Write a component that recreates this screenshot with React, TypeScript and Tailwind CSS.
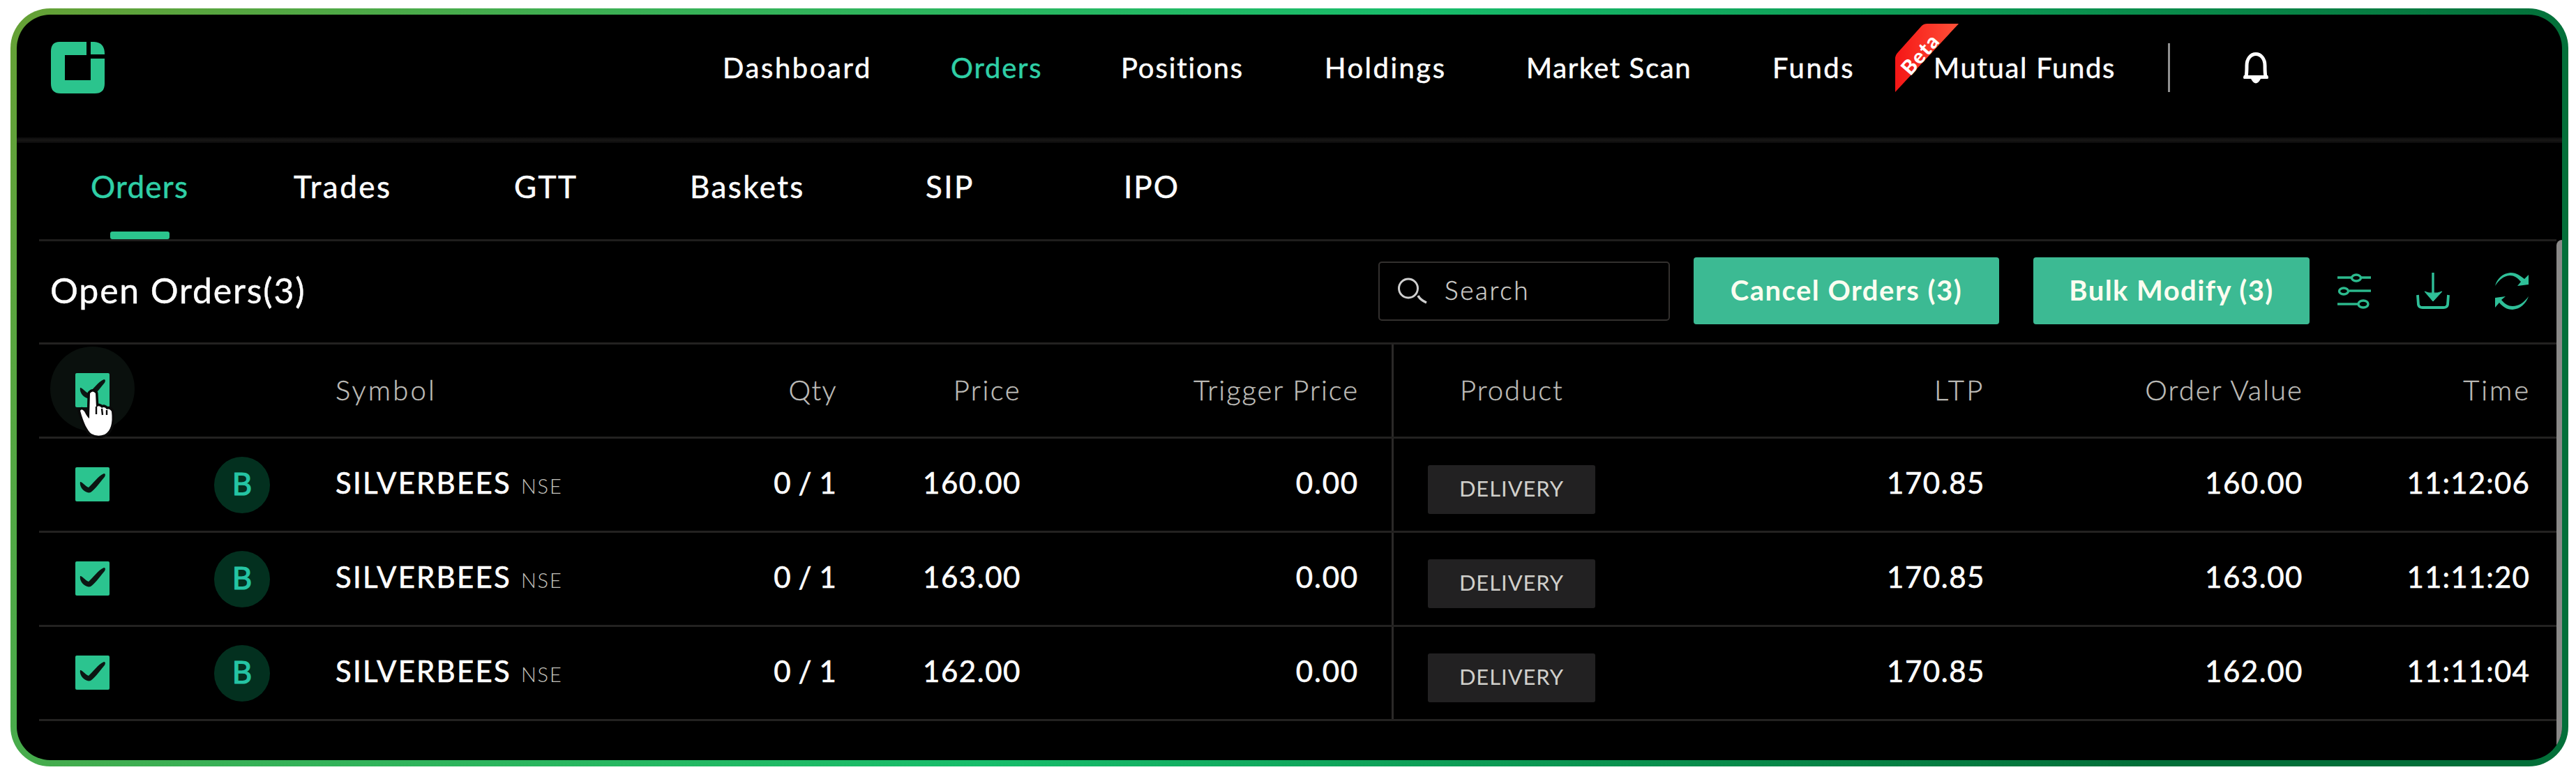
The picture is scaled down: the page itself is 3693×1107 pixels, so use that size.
import type { ReactNode } from "react";

const navItems = [
  { label: "Dashboard", cls: "w-[327px] tracking-[2.6px] text-white" },
  { label: "Orders", cls: "w-[244px] tracking-[1.8px] text-[#2fcfa6]" },
  { label: "Positions", cls: "w-[292px] tracking-[1.9px] text-white" },
  { label: "Holdings", cls: "w-[289px] tracking-[2.5px] text-white" },
  { label: "Market Scan", cls: "w-[353px] tracking-[1.7px] text-white" },
  { label: "Funds", cls: "w-[231px] tracking-[2.5px] text-white" },
];

const tabs = [
  { label: "Orders", active: true, cls: "w-[291px] tracking-[1.26px] text-[#2fcfa6]" },
  { label: "Trades", active: false, cls: "w-[316px] tracking-[2.49px] text-white" },
  { label: "GTT", active: false, cls: "w-[252px] tracking-[2.5px] text-white" },
  { label: "Baskets", active: false, cls: "w-[338px] tracking-[2.4px] text-white" },
  { label: "SIP", active: false, cls: "w-[284px] tracking-[2.4px] text-white" },
  { label: "IPO", active: false, cls: "tracking-[2px] text-white" },
];

const orders = [
  { price: "160.00", value: "160.00", time: "11:12:06" },
  { price: "163.00", value: "163.00", time: "11:11:20" },
  { price: "162.00", value: "162.00", time: "11:11:04" },
];

const rowGrid =
  "grid h-[135px] grid-cols-[196px_229px_418px_301px_264px_534px_402px_446px_456px_363px] border-b-[3px] border-[#232221]";

function Logo() {
  return (
    <svg className="h-[74px] w-[77px] shrink-0" viewBox="0 0 77 74" fill="#2bc48d">
      <path d="M12 0H51V19H20V55H57V24H77V60Q77 74 63 74H14Q0 74 0 60V14Q0 0 12 0Z" />
      <path d="M57 0H62Q77 1 77 17V18H57Z" />
    </svg>
  );
}

function Bell() {
  return (
    <svg className="ml-[104px] h-[46px] w-[38px] shrink-0" viewBox="0 0 38 46" fill="none">
      <path
        d="M5 36C6 31 6 26 6 20C6 10 12 3.5 19 3.5S32 10 32 20C32 26 32 31 33 36"
        stroke="white"
        strokeWidth="5"
      />
      <path d="M2 34H36Q38 38 36 39H26Q19 52 12 39H2Q0 38 2 34Z" fill="white" />
    </svg>
  );
}

function BetaRibbon() {
  return (
    <svg className="absolute -left-[55px] -top-[39px] h-[98px] w-[91px] overflow-visible" viewBox="0 0 91 98">
      <defs>
        <linearGradient id="ribbon" x1="0" y1="0" x2="1" y2="0">
          <stop offset="0" stopColor="#f51616" />
          <stop offset="1" stopColor="#ff5138" />
        </linearGradient>
      </defs>
      <path d="M0 50Q0 45 4 41L38 3Q41 0 46 0H91L0 98Z" fill="url(#ribbon)" />
      <text
        transform="translate(35 43) rotate(-49)"
        textAnchor="middle"
        dominantBaseline="central"
        fill="#fff"
        fontFamily="Lato, sans-serif"
        fontWeight="900"
        fontSize="29"
      >
        Beta
      </text>
    </svg>
  );
}

function Checkbox() {
  return (
    <svg className="h-[49px] w-[49px]" viewBox="0 0 49 49">
      <rect width="49" height="49" rx="2" fill="#2bc48f" />
      <path
        d="M7 21C9 20 13 26 19 29C25 24 32 13 41 9C44 9 43 13 41 15C35 22 28 32 22 36C19 37 16 36 13 34C9 31 6 26 7 21Z"
        fill="#0c1512"
      />
    </svg>
  );
}

function HandCursor() {
  return (
    <svg className="absolute left-[51px] top-[62px] h-[70px] w-[56px] overflow-visible" viewBox="0 0 56 70">
      <path
        d="M22 8Q26 3 30 8L31 28Q35 24 39 29Q43 26 46 31Q50 29 53 34Q56 60 43 67Q33 71 24 66C18 61 13 51 8 33Q10 29 14 34Q18 42 21 44Z"
        fill="white"
        stroke="#0a0a0a"
        strokeWidth="7"
        strokeLinejoin="round"
        paintOrder="stroke"
      />
      <path d="M31 27V38M39 30L40 39M46 32V39" stroke="#0a0a0a" strokeWidth="2.4" />
    </svg>
  );
}

function SlidersIcon() {
  return (
    <svg className="ml-[40px] h-[51px] w-[48px] shrink-0" viewBox="0 0 48 51" fill="none" stroke="#2cba8d" strokeWidth="3.4">
      <path d="M0 6H20M34 6H48" />
      <ellipse cx="27" cy="6.500" rx="6.500" ry="4.500" />
      <path d="M17 25H48" />
      <ellipse cx="9" cy="25.500" rx="6.500" ry="4.500" />
      <path d="M0 44H30" />
      <ellipse cx="37" cy="44" rx="7" ry="5" />
    </svg>
  );
}

function DownloadIcon() {
  return (
    <svg className="ml-[65px] h-[52px] w-[48px] shrink-0" viewBox="0 0 48 52" fill="none" stroke="#2fbf98">
      <path d="M24 0V32" strokeWidth="3.4" />
      <path d="M12 27Q18 30 24 29Q30 30 37 27L24 41Z" fill="#2fbf98" />
      <path d="M2 32L3 46Q4 50 9 50H39Q44 50 45 46L46 32" strokeWidth="3.800" />
    </svg>
  );
}

function RefreshIcon() {
  return (
    <svg className="ml-[64px] h-[53px] w-[50px] shrink-0" viewBox="0 0 50 53" fill="#2fbf98">
      <path d="M1 19C4 8 12 1 23 0C32 0 38 5 43 9L49 3V17L33 19L38 13C33 7 28 4 22 4C13 5 7 10 1 19Z" />
      <path d="M49 34C45 45 37 52 26 53C18 53 12 49 7 43L1 50V36L16 34L10 39C15 45 20 48 26 48C35 48 42 43 49 34Z" />
    </svg>
  );
}

function NumberCell({ children, cls }: { children: ReactNode; cls: string }) {
  return (
    <div
      className={`flex items-center justify-end pb-[6px] text-[42px] text-white [-webkit-text-stroke:0.6px_white] ${cls}`}
    >
      {children}
    </div>
  );
}

function HeadCell({ children, cls }: { children: ReactNode; cls: string }) {
  return (
    <div
      className={`flex items-center pb-[3px] text-[40px] font-light text-[#bfbeba] [-webkit-text-stroke:0.4px_#bfbeba] ${cls}`}
    >
      {children}
    </div>
  );
}

export default function App() {
  return (
    <div className="h-[1107px] w-[3693px] whitespace-nowrap bg-white pl-[15px] pt-3 font-['Lato',sans-serif]">
      <div className="h-[1087px] w-[3667px] rounded-[57px] bg-[linear-gradient(120deg,#66a035_0%,#38b157_22%,#18bd6b_47%,#0b9350_68%,#036f39_86%)] p-[9px]">
        <div className="flex h-full flex-col overflow-hidden rounded-[48px] bg-black">
          <header className="flex h-[176px] shrink-0 items-center pb-[25px] pl-[49px] text-[40px] leading-[48px]">
            <Logo />
            <nav className="ml-[886px] flex [-webkit-text-stroke:0.5px_currentColor]">
              {navItems.map((item) => (
                <a key={item.label} className={item.cls}>
                  {item.label}
                </a>
              ))}
              <a className="relative w-[336px] tracking-[1.7px] text-white">
                Mutual Funds
                <BetaRibbon />
              </a>
            </nav>
            <div className="h-[70px] w-[3px] bg-[#909090]" />
            <Bell />
          </header>
          <div className="h-2 shrink-0 bg-linear-to-b from-[#0b0b0b] via-[#181716] to-[#0b0b0b]" />

          <div className="flex min-h-0 flex-1">
            <main className="ml-8 w-[3609px] shrink-0">
              <div className="flex h-[141px] items-center border-b-[3px] border-[#1f1e1d] pb-[14px] pl-[74px] text-[44px] leading-[53px]">
                {tabs.map((tab) => (
                  <a key={tab.label} className={`relative [-webkit-text-stroke:0.5px_currentColor] ${tab.cls}`}>
                    {tab.label}
                    {tab.active && (
                      <span className="absolute left-7 top-[91px] h-[11px] w-[85px] rounded-[3px] bg-[#2bc48d]" />
                    )}
                  </a>
                ))}
              </div>

              <div className="flex h-[148px] items-center border-b-[3px] border-[#232221] pb-[3px] pl-[16px]">
                <h1 className="mr-auto -mt-[2px] text-[50px] leading-[60px] tracking-[1.8px] text-white [-webkit-text-stroke:0.4px_white]">
                  Open Orders(3)
                </h1>
                <div className="flex h-[85px] w-[418px] items-center rounded-[5px] border-2 border-[#33302e] pl-[26px]">
                  <svg className="h-[38px] w-[42px]" viewBox="0 0 42 38" fill="none" stroke="#cfcfcf">
                    <circle cx="15" cy="15.500" r="13.500" strokeWidth="3" />
                    <path d="M29 26Q32 32 41 36" strokeWidth="3.500" />
                  </svg>
                  <span className="-mt-[3px] ml-[25px] text-[37px] font-light leading-[44px] tracking-[2.6px] text-[#cfcecb] [-webkit-text-stroke:0.4px_#cfcecb]">
                    Search
                  </span>
                </div>
                <button className="ml-[34px] h-[96px] w-[438px] rounded-[4px] bg-[#3cba93] pb-[3px] text-[40px] font-bold tracking-[1.5px] text-[#fbfdf0]">
                  Cancel Orders (3)
                </button>
                <button className="ml-[49px] h-[96px] w-[396px] rounded-[4px] bg-[#3cba93] pb-[3px] text-[40px] font-bold tracking-[1.43px] text-[#fbfdf0]">
                  Bulk Modify (3)
                </button>
                <SlidersIcon />
                <DownloadIcon />
                <RefreshIcon />
                <div className="w-[39px] shrink-0" />
              </div>

              <div className={rowGrid}>
                <div className="relative flex items-center pb-[2px] pl-[52px]">
                  <div className="absolute left-[16px] top-[3px] h-[121px] w-[121px] rounded-full bg-[#0a100d]" />
                  <div className="relative">
                    <Checkbox />
                  </div>
                  <HandCursor />
                </div>
                <div />
                <HeadCell cls="tracking-[3.2px]">Symbol</HeadCell>
                <HeadCell cls="justify-end tracking-[1.39px]">Qty</HeadCell>
                <HeadCell cls="justify-end tracking-[2.45px]">Price</HeadCell>
                <HeadCell cls="justify-end border-r-[3px] border-[#2b2928] pr-[47px] tracking-[1.93px]">Trigger Price</HeadCell>
                <HeadCell cls="pl-[95px] tracking-[2.02px]">Product</HeadCell>
                <HeadCell cls="justify-end tracking-[3.5px]">LTP</HeadCell>
                <HeadCell cls="justify-end tracking-[2.03px]">Order Value</HeadCell>
                <HeadCell cls="justify-end pr-[37px] tracking-[2.93px]">Time</HeadCell>
              </div>

              {orders.map((order) => (
                <div key={order.time} className={rowGrid}>
                  <div className="flex items-center pb-[2px] pl-[52px]">
                    <Checkbox />
                  </div>
                  <div className="flex items-center pl-[55px]">
                    <div className="flex h-[81px] w-[80px] items-center justify-center rounded-full bg-[#03301f] pb-[5px] text-[44px] text-[#25c4a4] [-webkit-text-stroke:1.2px_#25c4a4]">
                      B
                    </div>
                  </div>
                  <div className="flex items-center pb-[6px]">
                    <div className="flex items-baseline">
                      <span className="text-[42px] tracking-[2.2px] text-white [-webkit-text-stroke:0.6px_white]">
                        SILVERBEES
                      </span>
                      <span className="ml-[14px] text-[29px] font-light tracking-[1.8px] text-[#c4c3be]">NSE</span>
                    </div>
                  </div>
                  <NumberCell cls="tracking-[0.1px] pr-px">0 / 1</NumberCell>
                  <NumberCell cls="tracking-[1.53px]">{order.price}</NumberCell>
                  <NumberCell cls="border-r-[3px] border-[#2b2928] pr-[47px] tracking-[1.79px]">0.00</NumberCell>
                  <div className="flex items-center pl-[49px] pt-[14px]">
                    <div className="flex h-[70px] w-[240px] items-center justify-center rounded-[3px] bg-[#222122] pb-[3px] text-[31px] tracking-[0.92px] text-[#d0cfcb]">
                      DELIVERY
                    </div>
                  </div>
                  <NumberCell cls="tracking-[1.53px]">170.85</NumberCell>
                  <NumberCell cls="tracking-[1.53px]">{order.value}</NumberCell>
                  <NumberCell cls="pr-[38px] tracking-[1.17px]">{order.time}</NumberCell>
                </div>
              ))}
            </main>
            <div className="mt-[139px] w-2 shrink-0 rounded-tl-[8px] bg-[#8a8988]" />
          </div>
        </div>
      </div>
    </div>
  );
}
